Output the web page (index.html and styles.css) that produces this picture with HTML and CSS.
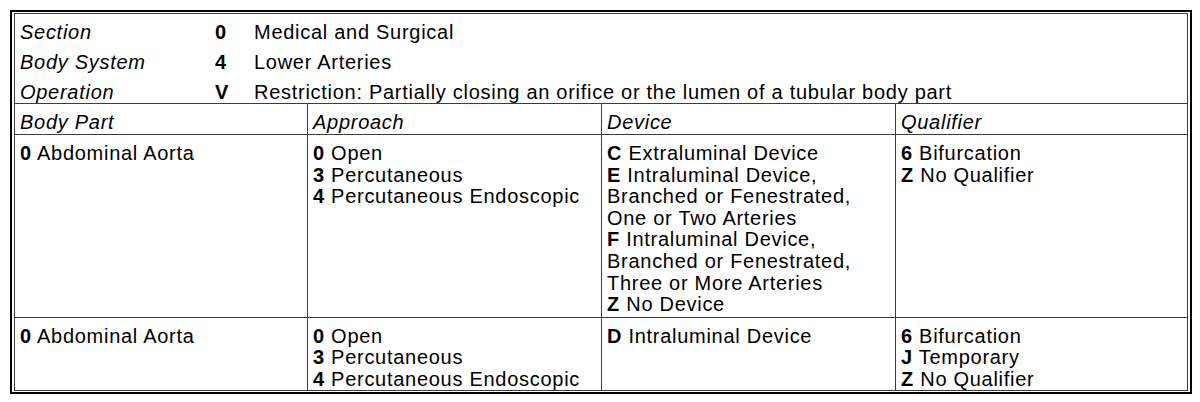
FILE: index.html
```html
<!DOCTYPE html>
<html>
<head>
<meta charset="utf-8">
<link rel="stylesheet" href="styles.css">
</head>
<body>
<div class="frame">
  <div class="table">
    <div class="meta">
      <span class="label">Section</span><b class="code">0</b><span class="desc">Medical and Surgical</span>
      <span class="label">Body System</span><b class="code">4</b><span class="desc">Lower Arteries</span>
      <span class="label">Operation</span><b class="code">V</b><span class="desc">Restriction: Partially closing an orifice or the lumen of a tubular body part</span>
    </div>
    <div class="grid">
      <div class="head">Body Part</div>
      <div class="head">Approach</div>
      <div class="head">Device</div>
      <div class="head last">Qualifier</div>

      <div class="cell"><b>0</b> Abdominal Aorta</div>
      <div class="cell"><b>0</b> Open<br><b>3</b> Percutaneous<br><b>4</b> Percutaneous Endoscopic</div>
      <div class="cell"><b>C</b> Extraluminal Device<br><b>E</b> Intraluminal Device,<br>Branched or Fenestrated,<br>One or Two Arteries<br><b>F</b> Intraluminal Device,<br>Branched or Fenestrated,<br>Three or More Arteries<br><b>Z</b> No Device</div>
      <div class="cell last"><b>6</b> Bifurcation<br><b>Z</b> No Qualifier</div>

      <div class="cell final"><b>0</b> Abdominal Aorta</div>
      <div class="cell final"><b>0</b> Open<br><b>3</b> Percutaneous<br><b>4</b> Percutaneous Endoscopic</div>
      <div class="cell final"><b>D</b> Intraluminal Device</div>
      <div class="cell final last"><b>6</b> Bifurcation<br><b>J</b> Temporary<br><b>Z</b> No Qualifier</div>
    </div>
  </div>
</div>
</body>
</html>
```

FILE: styles.css
```css
html, body {
  margin: 0;
  padding: 0;
  background: #fff;
}
body {
  font-family: "Liberation Sans", Arial, sans-serif;
  font-size: 20px;
  letter-spacing: 0.72px;
  color: #000;
}
.frame {
  box-sizing: border-box;
  margin: 10px 0 0 10px;
  width: 1182px;
  height: 384px;
  border: 2px solid #000;
  padding: 1px 2px 1px 2px;
}
.table {
  box-sizing: border-box;
  height: 100%;
  border: 1px solid #3c3c3c;
  display: flex;
  flex-direction: column;
}
.meta {
  box-sizing: border-box;
  height: 90px;
  border-bottom: 1px solid #3c3c3c;
  padding: 3px 0 0 5px;
  display: grid;
  grid-template-columns: 195px 39px 1fr;
  grid-auto-rows: 30px;
  line-height: 30px;
  overflow: visible;
}
.meta .label {
  font-style: italic;
}
.meta .code {
  font-weight: bold;
}
.grid {
  flex: 1;
  display: grid;
  grid-template-columns: 293px 294px 294px 1fr;
  grid-template-rows: auto auto 1fr;
}
.head {
  box-sizing: border-box;
  font-style: italic;
  padding: 7px 0 0 5px;
  line-height: 23px;
  border-right: 1px solid #3c3c3c;
  border-bottom: 1px solid #3c3c3c;
}
.cell {
  box-sizing: border-box;
  padding: 8px 0 1px 5px;
  line-height: 21.6px;
  border-right: 1px solid #3c3c3c;
  border-bottom: 1px solid #3c3c3c;
}
.cell.final {
  border-bottom: none;
  padding-bottom: 0;
}
.last {
  border-right: none;
}
b {
  font-weight: bold;
}
```
